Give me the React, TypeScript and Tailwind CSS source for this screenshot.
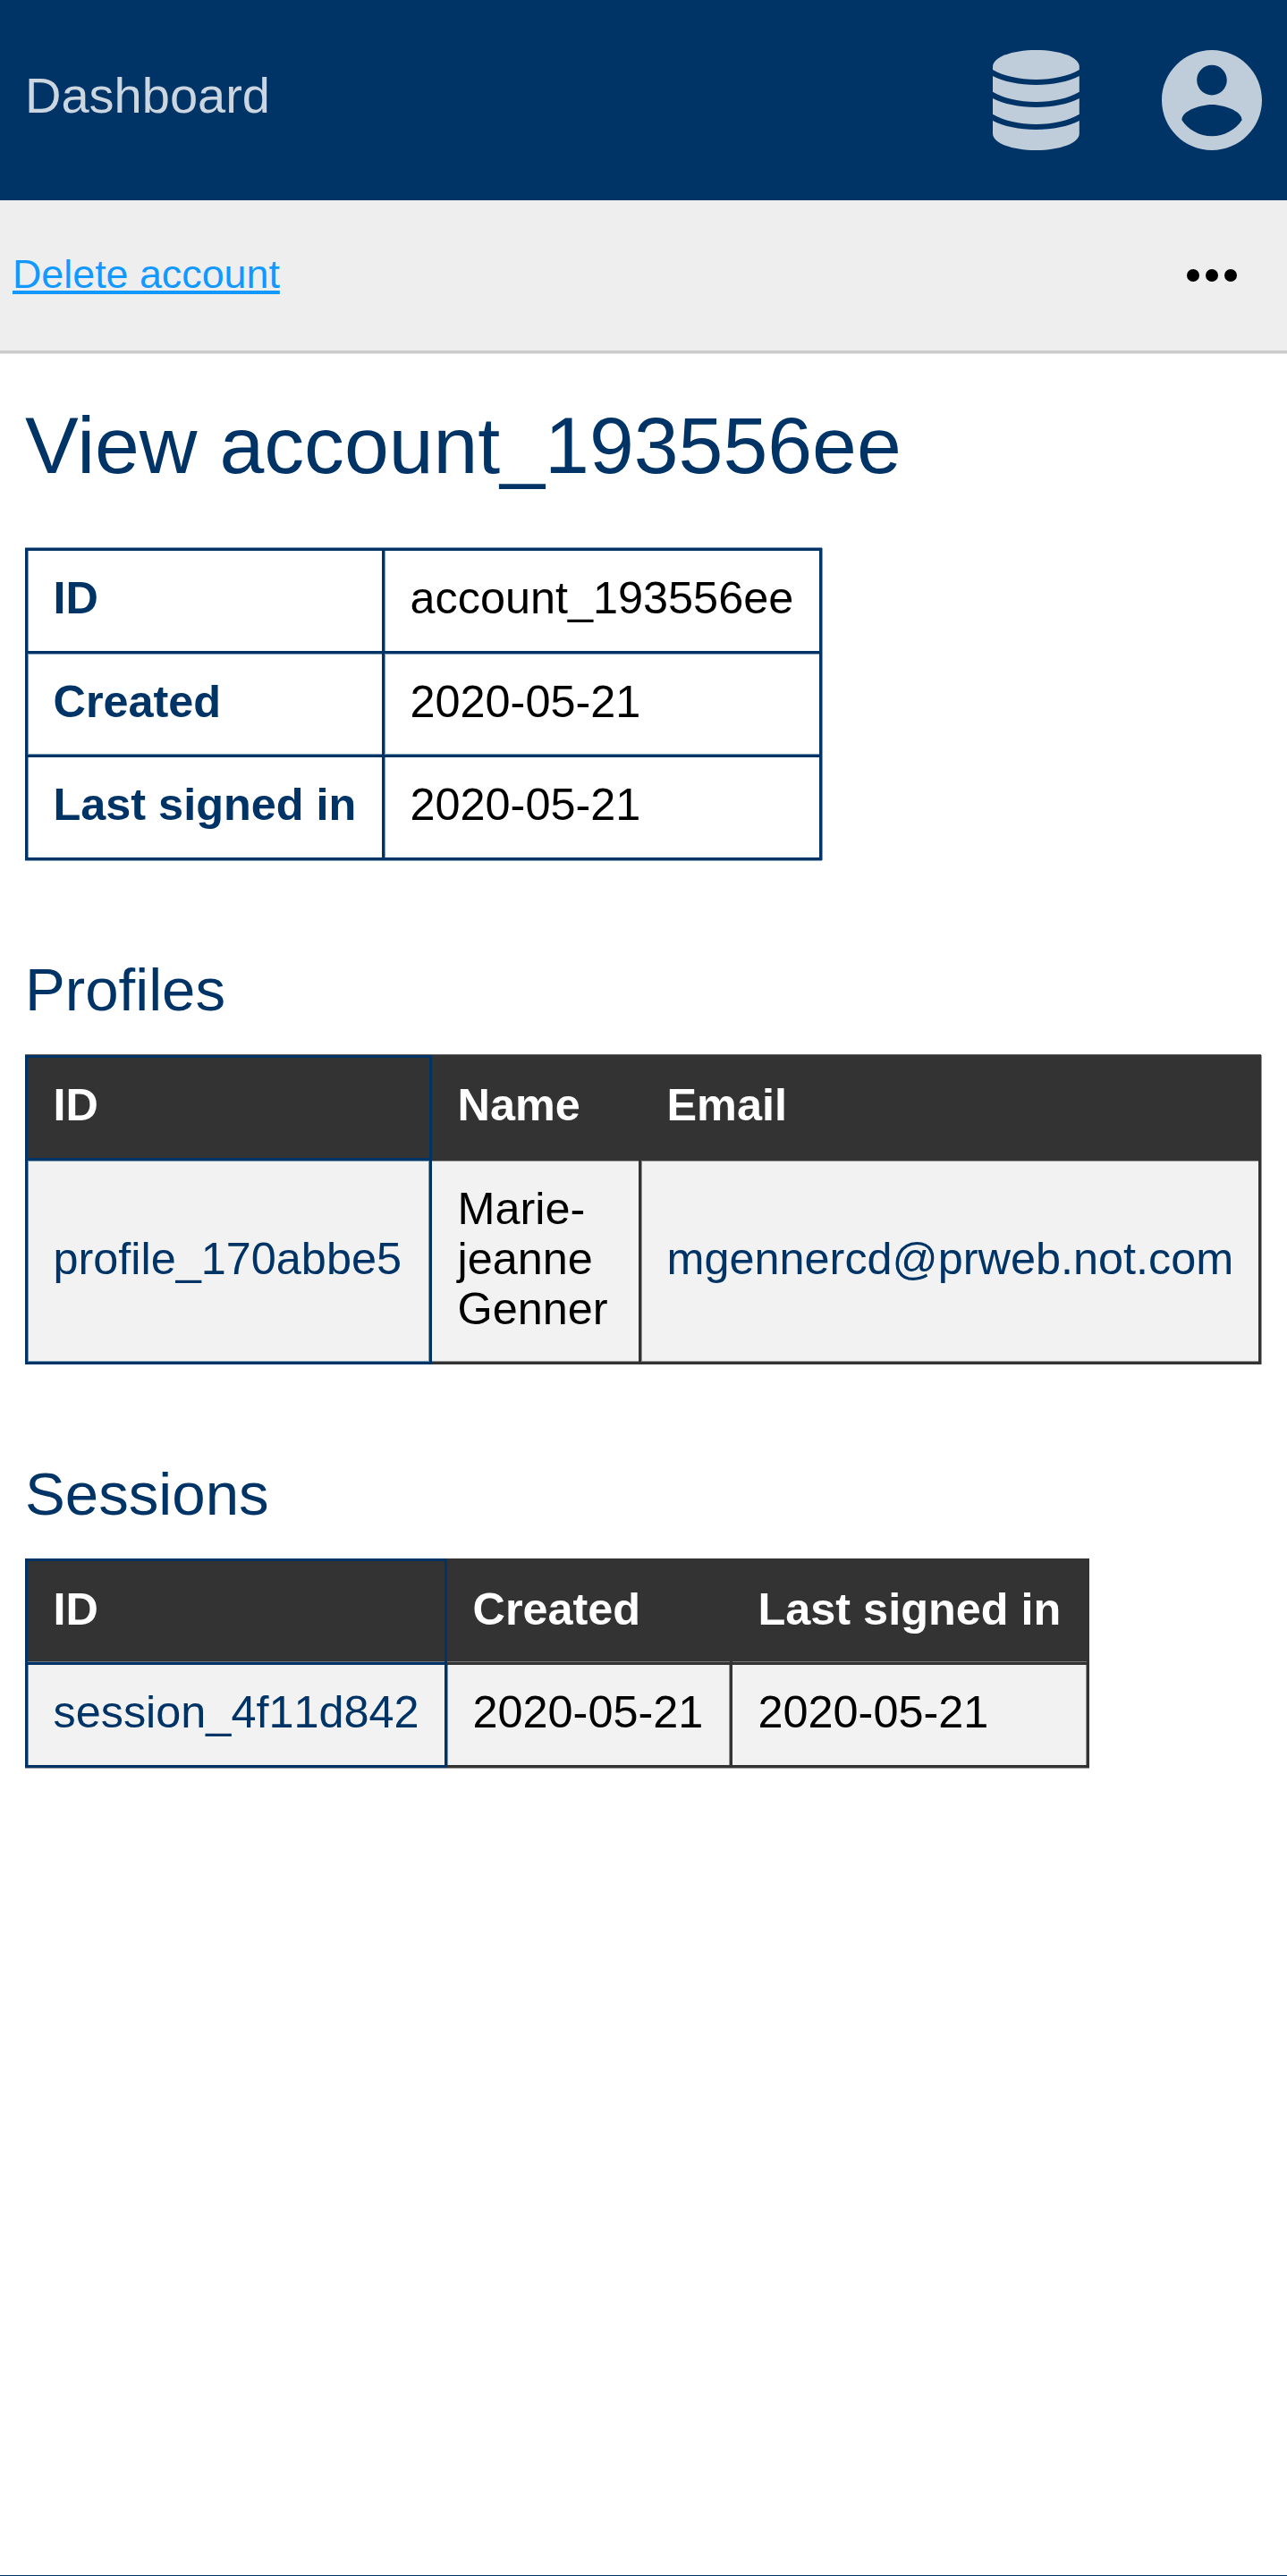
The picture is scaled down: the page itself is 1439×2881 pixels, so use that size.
import React from "react";

const blueCell = "border-[3px] border-[#003366]";
const darkCell = "border-[3px] border-[#333333]";
const pad = "pl-[28.5px] pr-0 pt-[24px] pb-[30px] text-left";

function DatabaseIcon() {
  return (
    <svg className="h-[112px] w-[97px]" viewBox="0 0 97 112" fill="#bfccd9">
      <path d="M0 18.5C0 8 21.5 0 48.4 0S96.8 8 96.8 18.5V22C85 29 67 32.9 48.4 32.9S11.8 29 0 22Z" />
      <path d="M0 29C12 35.3 30 38.9 48.4 38.9S84.8 35.3 96.8 29V46.8C85 54 67 57.9 48.4 57.9S11.8 54 0 46.8Z" />
      <path d="M0 54C12 60.3 30 63.9 48.4 63.9S84.8 60.3 96.8 54V71.8C85 79 67 82.9 48.4 82.9S11.8 79 0 71.8Z" />
      <path d="M0 79C12 85.3 30 88.9 48.4 88.9S84.8 85.3 96.8 79V93.5C96.8 104 75.3 112 48.4 112S0 104 0 93.5Z" />
    </svg>
  );
}

function AccountIcon() {
  return (
    <svg className="h-[112px] w-[112px]" viewBox="2 2 20 20" fill="#bfccd9">
      <path d="M12 2C6.48 2 2 6.48 2 12s4.48 10 10 10 10-4.48 10-10S17.52 2 12 2zm0 3c1.66 0 3 1.34 3 3s-1.34 3-3 3-3-1.34-3-3 1.34-3 3-3zm0 14.2c-2.5 0-4.71-1.28-6-3.22.03-1.99 4-3.08 6-3.08 1.99 0 5.97 1.09 6 3.08-1.29 1.94-3.5 3.22-6 3.22z" />
    </svg>
  );
}

function MoreIcon() {
  return (
    <svg className="h-[84px] w-[84px]" viewBox="0 0 24 24" fill="#000">
      <circle cx="6" cy="12" r="2" />
      <circle cx="12" cy="12" r="2" />
      <circle cx="18" cy="12" r="2" />
    </svg>
  );
}

const details = [
  { label: "ID", value: "account_193556ee", row: "h-[115px]", edge: "shadow-[inset_1px_0_0_#7f99b3]" },
  { label: "Created", value: "2020-05-21", row: "h-[116px]", edge: "shadow-[inset_1px_1px_0_#7f99b3,inset_0_-1px_0_#7f99b3]" },
  { label: "Last signed in", value: "2020-05-21", row: "h-[115px]", edge: "shadow-[inset_1px_0_0_#7f99b3]" },
];

export default function App() {
  return (
    <div className="h-[2881px] w-full overflow-hidden border-b border-[#003366] bg-white font-['Liberation_Sans',Arial,sans-serif] text-black">
      <header className="flex h-[224px] items-center justify-between bg-[#003366] px-7">
        <a className="pb-[10px] text-[56px] leading-[64px] text-[#ccd6e0]">Dashboard</a>
        <div className="flex gap-[92px]">
          <DatabaseIcon />
          <AccountIcon />
        </div>
      </header>
      <nav className="flex h-[171px] items-center justify-between border-b-[3px] border-[#cccccc] bg-[#eeeeee] pr-[42px] pl-[14px] shadow-[0_1px_0_#e5e5e5]">
        <a className="pb-1 text-[44.8px] leading-[52px] text-[#1199ff] underline decoration-[4px] underline-offset-[3px]">
          Delete account
        </a>
        <MoreIcon />
      </nav>

      <main className="px-7 pt-[51px] text-[50.4px] leading-[56px]">
        <h1 className="text-[89.6px] leading-[104px] text-[#003366]">View account_193556ee</h1>

        <table className="mt-[63px] w-[891px] table-fixed border-collapse shadow-[1px_0_0_#7f99b3,0_1px_0_#7f99b3,0_-1px_0_#7f99b3]">
          <colgroup>
            <col className="w-[399px]" />
            <col />
          </colgroup>
          <tbody>
            {details.map(({ label, value, row, edge }) => (
              <tr key={label} className={row}>
                <th className={`${blueCell} ${pad} ${edge} font-bold text-[#003366]`}>{label}</th>
                <td className={`${blueCell} ${pad} ${edge}`}>{value}</td>
              </tr>
            ))}
          </tbody>
        </table>

        <h2 className="mt-[105px] text-[67.2px] leading-[80px] text-[#003366]">Profiles</h2>
        <table className="mt-[33px] w-[1382px] table-fixed border-collapse shadow-[0_-1px_0_#666666,1px_0_0_#999999]">
          <colgroup>
            <col className="w-[452px]" />
            <col className="w-[234px]" />
            <col />
          </colgroup>
          <thead>
            <tr className="h-[115px] bg-[#333333] text-white">
              <th className={`${blueCell} ${pad} font-bold`}>ID</th>
              <th className={`${darkCell} ${pad} font-bold`}>Name</th>
              <th className={`${darkCell} ${pad} font-bold`}>Email</th>
            </tr>
          </thead>
          <tbody>
            <tr className="h-[228px] bg-[#f2f2f2]">
              <td className={`${blueCell} ${pad} text-[#003366] shadow-[inset_1px_1px_0_#7892ac,inset_-1px_-1px_0_#7892ac]`}>
                profile_170abbe5
              </td>
              <td className={`${darkCell} ${pad} shadow-[inset_0_1px_0_#929292,inset_0_-1px_0_#929292]`}>
                Marie-
                <br />
                jeanne
                <br />
                Genner
              </td>
              <td className={`${darkCell} ${pad} text-[#003366] shadow-[inset_1px_1px_0_#929292,inset_0_-1px_0_#929292]`}>
                mgennercd@prweb.not.com
              </td>
            </tr>
          </tbody>
        </table>

        <h2 className="mt-[105px] text-[67.2px] leading-[80px] text-[#003366]">Sessions</h2>
        <table className="mt-8 w-[1190px] table-fixed border-collapse shadow-[0_1px_0_#929292]">
          <colgroup>
            <col className="w-[469px]" />
            <col className="w-[319px]" />
            <col />
          </colgroup>
          <thead>
            <tr className="h-[116px] bg-[#333333] text-white">
              <th className={`${blueCell} ${pad} font-bold shadow-[inset_0_-1px_0_#66788a]`}>ID</th>
              <th className={`${darkCell} ${pad} font-bold shadow-[inset_0_-1px_0_#777777]`}>Created</th>
              <th className={`${darkCell} ${pad} font-bold shadow-[inset_0_-1px_0_#777777]`}>Last signed in</th>
            </tr>
          </thead>
          <tbody>
            <tr className="h-[115px] bg-[#f2f2f2]">
              <td className={`${blueCell} ${pad} text-[#003366] [font-kerning:none] shadow-[inset_1px_0_0_#7892ac]`}>session_4f11d842</td>
              <td className={`${darkCell} ${pad} shadow-[inset_1px_0_0_#7892ac,inset_-1px_0_0_#929292]`}>2020-05-21</td>
              <td className={`${darkCell} ${pad} shadow-[inset_-1px_0_0_#929292]`}>2020-05-21</td>
            </tr>
          </tbody>
        </table>
      </main>
    </div>
  );
}
